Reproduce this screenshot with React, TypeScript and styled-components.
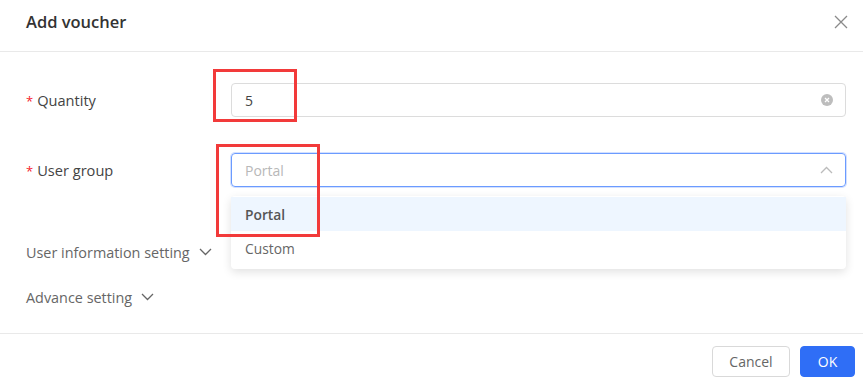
import styled, { createGlobalStyle } from 'styled-components';

const GlobalStyle = createGlobalStyle`
  html, body {
    margin: 0;
    padding: 0;
    background: #fff;
  }
  body {
    font-family: "Open Sans", "Liberation Sans", Arial, sans-serif;
    color: #333;
  }
`;

const Dialog = styled.div`
  width: 863px;
  height: 388px;
  position: relative;
  display: flex;
  flex-direction: column;
  background: #fff;
`;

const Header = styled.div`
  height: 52px;
  border-bottom: 1px solid #e9e9e9;
  display: flex;
  align-items: center;
  justify-content: space-between;
  padding: 0 14px 8px 26px;
  box-sizing: border-box;
`;

const Title = styled.div`
  font-size: 16.5px;
  font-weight: 600;
  color: #333;
`;

const CloseBtn = styled.div`
  width: 16px;
  height: 16px;
  display: flex;
  align-items: center;
  justify-content: center;
`;

const Body = styled.div`
  flex: 1;
  padding: 31px 17px 0 26px;
  position: relative;
`;

const FormRow = styled.div`
  display: flex;
  align-items: center;
  height: 34px;
  margin-bottom: 36px;
  position: relative;
`;

const Label = styled.div`
  width: 205px;
  font-size: 14.6px;
  color: #444;
  display: flex;
  align-items: center;
`;

const Star = styled.span`
  color: #f5222d;
  font-size: 13px;
  margin-right: 4px;
  margin-top: 2px;
`;

const Field = styled.div<{ focused?: boolean }>`
  flex: 1;
  height: 34px;
  box-sizing: border-box;
  border: 1px solid ${p => (p.focused ? '#6b9bff' : '#dcdcdc')};
  box-shadow: ${p => (p.focused ? '0 0 0 1px rgba(80,130,255,0.25)' : 'none')};
  border-radius: 4px;
  display: flex;
  align-items: center;
  justify-content: space-between;
  padding: 0 12px 0 13px;
  font-size: 14px;
`;

const Value = styled.span<{ placeholder?: boolean }>`
  color: ${p => (p.placeholder ? '#b8b8b8' : '#444')};
`;

const Collapse = styled.div<{ gap: number }>`
  display: flex;
  align-items: center;
  gap: 9px;
  font-size: 14.4px;
  color: #666;
  height: 20px;
  margin-top: ${p => p.gap}px;
`;

const Menu = styled.div`
  position: absolute;
  left: 205px;
  right: 0;
  top: 43px;
  background: #fff;
  border-radius: 4px;
  box-shadow: 0 3px 10px rgba(0, 0, 0, 0.12);
  padding: 1px 0 4px;
  z-index: 2;
`;

const Option = styled.div<{ active?: boolean }>`
  height: 34px;
  display: flex;
  align-items: center;
  padding-left: 14px;
  font-size: 13.8px;
  color: ${p => (p.active ? '#555' : '#666')};
  font-weight: ${p => (p.active ? 600 : 400)};
  background: ${p => (p.active ? '#eef6ff' : '#fff')};
`;

const Highlight = styled.div<{ x: number; y: number; w: number; h: number }>`
  position: absolute;
  left: ${p => p.x}px;
  top: ${p => p.y}px;
  width: ${p => p.w}px;
  height: ${p => p.h}px;
  border: 3px solid #f23a3a;
  box-sizing: border-box;
  z-index: 3;
  pointer-events: none;
`;

const Footer = styled.div`
  height: 55px;
  border-top: 1px solid #e9e9e9;
  display: flex;
  justify-content: flex-end;
  align-items: flex-start;
  padding: 12px 8px 0 0;
  box-sizing: border-box;
  gap: 10px;
`;

const Button = styled.button<{ primary?: boolean }>`
  height: 31px;
  border-radius: 4px;
  font-family: inherit;
  font-size: 14px;
  padding: 0;
  width: ${p => (p.primary ? '55px' : '78px')};
  border: 1px solid ${p => (p.primary ? '#2f6ef6' : '#d9d9d9')};
  background: ${p => (p.primary ? '#2f6ef6' : '#fff')};
  color: ${p => (p.primary ? '#fff' : '#666')};
`;

const Chevron = ({ up, color = '#666' }: { up?: boolean; color?: string }) => (
  <svg width="13" height="8" viewBox="0 0 13 8" fill="none">
    <path
      d={up ? 'M1 7 L6.5 1.5 L12 7' : 'M1 1 L6.5 6.5 L12 1'}
      stroke={color}
      strokeWidth="1.3"
    />
  </svg>
);

const App = () => {
  return (
    <Dialog>
      <GlobalStyle />
      <Header>
        <Title>Add voucher</Title>
        <CloseBtn>
          <svg width="14" height="14" viewBox="0 0 14 14">
            <path d="M1 1 L13 13 M13 1 L1 13" stroke="#8a8a8a" strokeWidth="1.3" />
          </svg>
        </CloseBtn>
      </Header>
      <Body>
        <FormRow>
          <Label>
            <Star>*</Star>Quantity
          </Label>
          <Field>
            <Value>5</Value>
            <svg width="12" height="12" viewBox="0 0 12 12">
              <circle cx="6" cy="6" r="6" fill="#bdbdbd" />
              <path d="M4 4 L8 8 M8 4 L4 8" stroke="#fff" strokeWidth="1.3" />
            </svg>
          </Field>
        </FormRow>
        <FormRow>
          <Label>
            <Star>*</Star>User group
          </Label>
          <Field focused>
            <Value placeholder>Portal</Value>
            <Chevron up color="#bbb" />
          </Field>
          <Menu>
            <Option active>Portal</Option>
            <Option>Custom</Option>
          </Menu>
        </FormRow>
        <Collapse gap={55}>
          User information setting <Chevron />
        </Collapse>
        <Collapse gap={25}>
          Advance setting <Chevron />
        </Collapse>
      </Body>
      <Footer>
        <Button>Cancel</Button>
        <Button primary>OK</Button>
      </Footer>
      <Highlight x={213} y={69} w={84} h={53} />
      <Highlight x={216} y={144} w={104} h={93} />
    </Dialog>
  );
};

export default App;
